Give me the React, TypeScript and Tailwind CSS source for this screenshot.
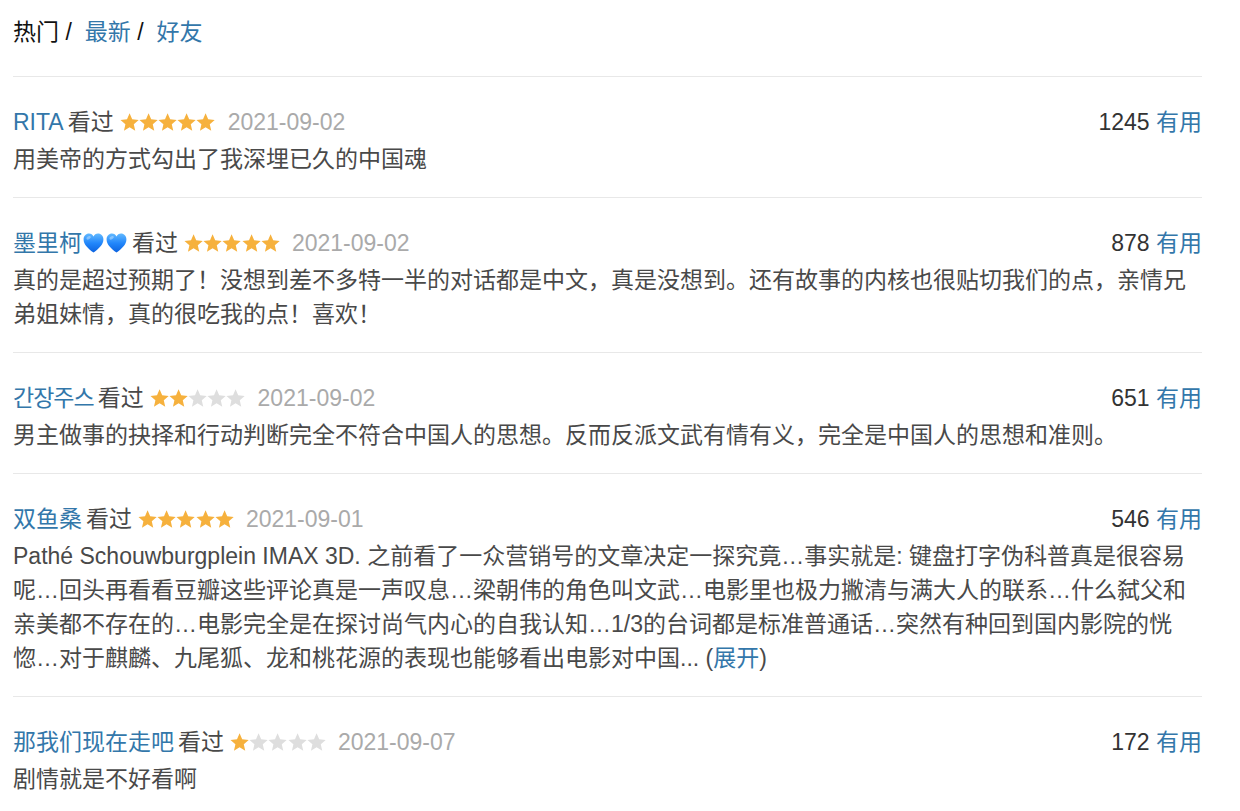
import React from 'react'

type Review = {
  name: string
  hearts?: number
  nameClass?: string
  rating: number
  date: string
  votes: number
  content: React.ReactNode
}

const REVIEWS: Review[] = [
  {
    name: 'RITA',
    rating: 5,
    date: '2021-09-02',
    votes: 1245,
    content: '用美帝的方式勾出了我深埋已久的中国魂',
  },
  {
    name: '墨里柯',
    hearts: 2,
    rating: 5,
    date: '2021-09-02',
    votes: 878,
    content: '真的是超过预期了！没想到差不多特一半的对话都是中文，真是没想到。还有故事的内核也很贴切我们的点，亲情兄弟姐妹情，真的很吃我的点！喜欢！',
  },
  {
    name: '간장주스',
    nameClass: 'tracking-[-1px]',
    rating: 2,
    date: '2021-09-02',
    votes: 651,
    content: '男主做事的抉择和行动判断完全不符合中国人的思想。反而反派文武有情有义，完全是中国人的思想和准则。',
  },
  {
    name: '双鱼桑',
    rating: 5,
    date: '2021-09-01',
    votes: 546,
    content: (
      <>
        Pathé Schouwburgplein IMAX 3D. 之前看了一众营销号的文章决定一探究竟…事实就是: 键盘打字伪科普真是很容易呢…回头再看看豆瓣这些评论真是一声叹息…梁朝伟的角色叫文武…电影里也极力撇清与满大人的联系…什么弑父和亲美都不存在的…电影完全是在探讨尚气内心的自我认知…1/3的台词都是标准普通话…突然有种回到国内影院的恍惚…对于麒麟、九尾狐、龙和桃花源的表现也能够看出电影对中国... (<a className="text-[#3377aa]">展开</a>)
      </>
    ),
  },
  {
    name: '那我们现在走吧',
    rating: 1,
    date: '2021-09-07',
    votes: 172,
    content: '剧情就是不好看啊',
  },
]

// chunky five-point star, like the douban rating stars
const STAR_PATH = 'M10 0.3 L12.7 6.58 L19.51 7.21 L14.37 11.72 L15.88 18.39 L10 14.9 L4.12 18.39 L5.63 11.72 L0.49 7.21 L7.3 6.58 Z'

function Stars({ rating }: { rating: number }) {
  return (
    <span className="ml-[6px] flex items-center">
      {[0, 1, 2, 3, 4].map(i => (
        <svg key={i} width="19.2" height="18.3" viewBox="0 0 20 19" className="shrink-0">
          <path d={STAR_PATH} fill={i < rating ? '#f6b13d' : '#dedede'} />
        </svg>
      ))}
    </span>
  )
}

function BlueHeart({ id }: { id: string }) {
  return (
    <svg width="23" height="22" viewBox="0 0 23 22" className="shrink-0">
      <defs>
        <linearGradient id={id} x1="0" y1="0" x2="0" y2="1">
          <stop offset="0" stopColor="#62b9ff" />
          <stop offset="0.5" stopColor="#2287fb" />
          <stop offset="1" stopColor="#0b62df" />
        </linearGradient>
      </defs>
      <path
        d="M11.5 20.6 C 5.2 15.6 1.6 12 1.6 7.4 C 1.6 4.1 4 1.6 7 1.6 C 9.1 1.6 10.6 2.8 11.5 4.5 C 12.4 2.8 13.9 1.6 16 1.6 C 19 1.6 21.4 4.1 21.4 7.4 C 21.4 12 17.8 15.6 11.5 20.6 Z"
        fill={`url(#${id})`}
      />
      <ellipse cx="6.6" cy="5.8" rx="2.4" ry="1.5" fill="#ffffff" opacity="0.35" transform="rotate(-30 6.6 5.8)" />
    </svg>
  )
}

function ReviewItem({ review, index }: { review: Review; index: number }) {
  return (
    <div className="border-t border-[#e8e8e8] pt-[25px] pb-[21px]">
      <div className="flex h-[40px] items-center justify-between">
        <div className="flex items-center">
          <span className={`text-[#3377aa] whitespace-nowrap ${review.nameClass ?? ''}`}>{review.name}</span>
          {review.hearts ? (
            <span className="flex items-center">
              {Array.from({ length: review.hearts }).map((_, i) => (
                <BlueHeart key={i} id={`heart-${index}-${i}`} />
              ))}
            </span>
          ) : null}
          <span className="ml-[4px] text-[#494949]">看过</span>
          <Stars rating={review.rating} />
          <span className="ml-[12px] text-[#aaaaaa]">{review.date}</span>
        </div>
        <div className="whitespace-nowrap">
          <span className="text-[#333333]">{review.votes}</span>{' '}
          <a className="text-[#3377aa]">有用</a>
        </div>
      </div>
      <p className="leading-[34px] text-[#494949]">{review.content}</p>
    </div>
  )
}

export default function App() {
  return (
    <div className="min-h-screen bg-white font-['Liberation_Sans','Noto_Sans_CJK_SC','Noto_Sans_CJK_KR',sans-serif] text-[23px]">
      <div className="ml-[13px] w-[1189px]">
        {/* Tabs */}
        <div className="pt-[12px] pb-[24px]">
          <div className="flex h-[40px] items-center whitespace-pre text-[#111111]">
            <span>热门 /</span>
            <a className="ml-[13px] text-[#3377aa]">最新</a>
            <span> /</span>
            <a className="ml-[13px] text-[#3377aa]">好友</a>
          </div>
        </div>

        {REVIEWS.map((r, i) => (
          <ReviewItem key={r.name} review={r} index={i} />
        ))}
      </div>
    </div>
  )
}
